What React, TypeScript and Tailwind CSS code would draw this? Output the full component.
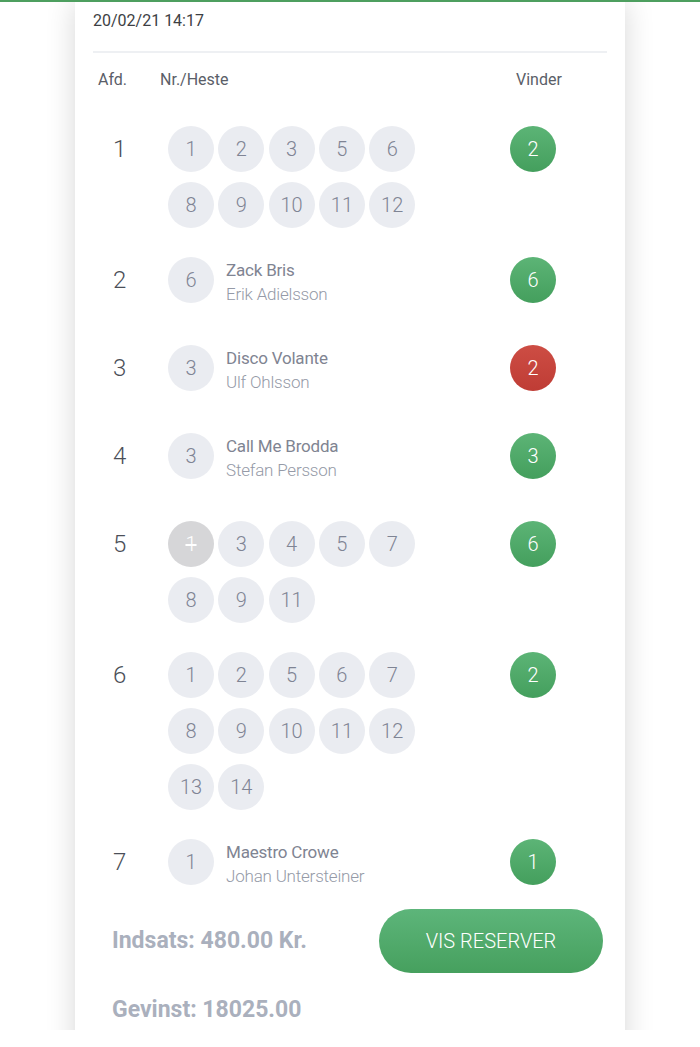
type Race = {
  afd: number;
  horses?: number[];
  scratched?: number[];
  pick?: { nr: number; name: string; driver: string };
  winner: number;
  lost?: boolean;
};

const races: Race[] = [
  { afd: 1, horses: [1, 2, 3, 5, 6, 8, 9, 10, 11, 12], winner: 2 },
  { afd: 2, pick: { nr: 6, name: "Zack Bris", driver: "Erik Adielsson" }, winner: 6 },
  { afd: 3, pick: { nr: 3, name: "Disco Volante", driver: "Ulf Ohlsson" }, winner: 2, lost: true },
  { afd: 4, pick: { nr: 3, name: "Call Me Brodda", driver: "Stefan Persson" }, winner: 3 },
  { afd: 5, horses: [1, 3, 4, 5, 7, 8, 9, 11], scratched: [1], winner: 6 },
  { afd: 6, horses: [1, 2, 5, 6, 7, 8, 9, 10, 11, 12, 13, 14], winner: 2 },
  { afd: 7, pick: { nr: 1, name: "Maestro Crowe", driver: "Johan Untersteiner" }, winner: 1 },
];

function Chip({ nr, scratched }: { nr: number; scratched?: boolean }) {
  if (scratched) {
    return (
      <div className="w-[46px] h-[46px] rounded-full bg-[#d6d6d8] flex items-center justify-center text-[20px] font-light text-white line-through">
        {nr}
      </div>
    );
  }
  return (
    <div className="w-[46px] h-[46px] rounded-full bg-[#eaecf1] flex items-center justify-center text-[20px] font-light text-[#7f8494]">
      {nr}
    </div>
  );
}

function RaceRow({ race }: { race: Race }) {
  return (
    <div className={"flex items-start " + (race.pick ? "h-[59px]" : "")}>
      <div className="w-[75px] pl-[20px] text-[24px] font-light leading-[46px] text-[#4b4f58]">{race.afd}</div>
      <div className="w-[342px]">
        {race.horses && (
          <div className="flex flex-wrap w-[253px] gap-x-[4.3px] gap-y-[10px]">
            {race.horses.map((h) => (
              <Chip key={h} nr={h} scratched={race.scratched?.includes(h)} />
            ))}
          </div>
        )}
        {race.pick && (
          <div className="flex items-start">
            <Chip nr={race.pick.nr} />
            <div className="ml-[12px] pt-[1px] tracking-[-0.2px]">
              <div className="text-[17px] leading-[24px] text-[#7f8492]">{race.pick.name}</div>
              <div className="text-[17px] leading-[24px] font-light text-[#959aa7]">{race.pick.driver}</div>
            </div>
          </div>
        )}
      </div>
      <div
        className={
          "w-[46px] h-[46px] rounded-full flex items-center justify-center text-[20px] font-light text-white bg-gradient-to-b " +
          (race.lost ? "from-[#cd4d44] to-[#bf3c35]" : "from-[#5cb476] to-[#449f5d]")
        }
      >
        {race.winner}
      </div>
    </div>
  );
}

export default function App() {
  return (
    <div className="bg-white min-h-[1047px] font-['Roboto',sans-serif]">
      <div className="h-[2px] bg-[#4d9f5f]" />
      <div className="h-[1028px] overflow-hidden px-[75px]">
        <div className="bg-white shadow-[0_0_28px_rgba(0,0,0,0.16)] px-[18px] pb-[60px] min-h-[1100px]">
          <div className="pt-[7px] text-[16px] leading-[24px] text-[#3d3f44]">20/02/21 14:17</div>
          <div className="mt-[18px] border-t-2 border-[#eef0f3]" />
          <div className="mt-[15px] flex text-[16px] leading-[24px] text-[#5a5e68]">
            <span className="w-[67px] pl-[5px]">Afd.</span>
            <span className="w-[356px]">Nr./Heste</span>
            <span>Vinder</span>
          </div>
          <div className="mt-[34px] flex flex-col gap-[29px]">
            {races.map((r) => (
              <RaceRow key={r.afd} race={r} />
            ))}
          </div>
          <div className="mt-[11px] flex items-center justify-between pl-[19px] pr-[4px]">
            <span className="text-[23px] font-bold text-[#aab0bd]">Indsats: 480.00 Kr.</span>
            <button className="w-[224px] h-[64px] rounded-full bg-gradient-to-b from-[#5db57a] to-[#46a05e] text-white text-[20px] font-light">
              VIS RESERVER
            </button>
          </div>
          <div className="mt-[20px] pl-[19px] text-[23px] font-bold text-[#aab0bd]">Gevinst: 18025.00</div>
        </div>
      </div>
    </div>
  );
}
